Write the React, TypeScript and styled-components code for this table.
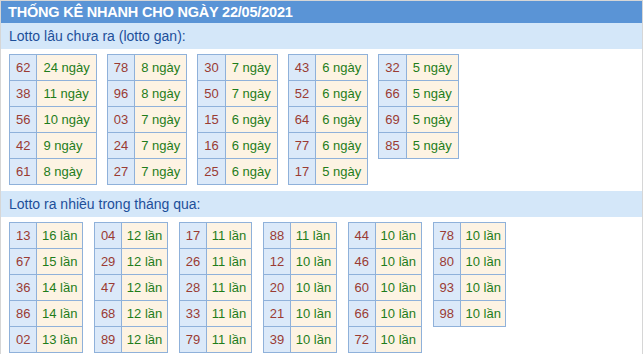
import React from "react";
import styled, {createGlobalStyle} from "styled-components";

//region Data
type Entry = [string, string];

const ganGroups: Entry[][] = [
    [["62", "24 ngày"], ["38", "11 ngày"], ["56", "10 ngày"], ["42", "9 ngày"], ["61", "8 ngày"]],
    [["78", "8 ngày"], ["96", "8 ngày"], ["03", "7 ngày"], ["24", "7 ngày"], ["27", "7 ngày"]],
    [["30", "7 ngày"], ["50", "7 ngày"], ["15", "6 ngày"], ["16", "6 ngày"], ["25", "6 ngày"]],
    [["43", "6 ngày"], ["52", "6 ngày"], ["64", "6 ngày"], ["77", "6 ngày"], ["17", "5 ngày"]],
    [["32", "5 ngày"], ["66", "5 ngày"], ["69", "5 ngày"], ["85", "5 ngày"]],
];

const hotGroups: Entry[][] = [
    [["13", "16 lần"], ["67", "15 lần"], ["36", "14 lần"], ["86", "14 lần"], ["02", "13 lần"]],
    [["04", "12 lần"], ["29", "12 lần"], ["47", "12 lần"], ["68", "12 lần"], ["89", "12 lần"]],
    [["17", "11 lần"], ["26", "11 lần"], ["28", "11 lần"], ["33", "11 lần"], ["79", "11 lần"]],
    [["88", "11 lần"], ["12", "10 lần"], ["20", "10 lần"], ["21", "10 lần"], ["39", "10 lần"]],
    [["44", "10 lần"], ["46", "10 lần"], ["60", "10 lần"], ["66", "10 lần"], ["72", "10 lần"]],
    [["78", "10 lần"], ["80", "10 lần"], ["93", "10 lần"], ["98", "10 lần"]],
];
//endregion

//region Styled
const GlobalStyle = createGlobalStyle`
    * {
        box-sizing: border-box;
    }
    body {
        margin: 0;
        background: #fff;
        font-family: Arial, "Liberation Sans", sans-serif;
    }
`;

const Box = styled.div`
    width: 643px;
    height: 354px;
    border: 1px solid #d6d6d6;
    border-bottom: none;
    overflow: hidden;
`;

const Title = styled.div`
    height: 22px;
    background: #5a94d6;
    color: #fff;
    font-size: 14.5px;
    font-weight: bold;
    letter-spacing: -0.2px;
    line-height: 23px;
    padding-left: 7px;
`;

const SectionHead = styled.div`
    height: 26px;
    background: #d4e7f9;
    color: #1d4f9a;
    font-size: 14px;
    line-height: 26px;
    padding-left: 8px;
`;

const Groups = styled.div<{gap: number}>`
    display: flex;
    align-items: flex-start;
    gap: ${props => props.gap}px;
    padding: 5px 0 6px 8px;
`;

const Table = styled.table`
    border-collapse: collapse;
    border: 1px solid #8fb1da;
    font-size: 13px;
`;

const NumCell = styled.td`
    height: 26px;
    padding: 0 6px;
    border: 1px solid #8fb1da;
    background: #dbe9f9;
    color: #9a3b33;
`;

const ValCell = styled.td<{pad: number}>`
    height: 26px;
    padding: 0 ${props => props.pad}px;
    border: 1px solid #8fb1da;
    background: #fdf3e3;
    color: #1f7d1b;
    white-space: nowrap;
`;
//endregion

const Group = ({rows, pad}: {rows: Entry[], pad: number}) => (
    <Table>
        <tbody>
        {rows.map(([n, v]) => (
            <tr key={n}>
                <NumCell>{n}</NumCell>
                <ValCell pad={pad}>{v}</ValCell>
            </tr>
        ))}
        </tbody>
    </Table>
);

const App = () => {
    return (
        <>
            <GlobalStyle/>
            <Box>
                <Title>THỐNG KÊ NHANH CHO NGÀY 22/05/2021</Title>
                <SectionHead>Lotto lâu chưa ra (lotto gan):</SectionHead>
                <Groups gap={10}>
                    {ganGroups.map((g, i) => <Group key={i} rows={g} pad={6}/>)}
                </Groups>
                <SectionHead>Lotto ra nhiều trong tháng qua:</SectionHead>
                <Groups gap={11}>
                    {hotGroups.map((g, i) => <Group key={i} rows={g} pad={4.5}/>)}
                </Groups>
            </Box>
        </>
    );
};

export default App;
